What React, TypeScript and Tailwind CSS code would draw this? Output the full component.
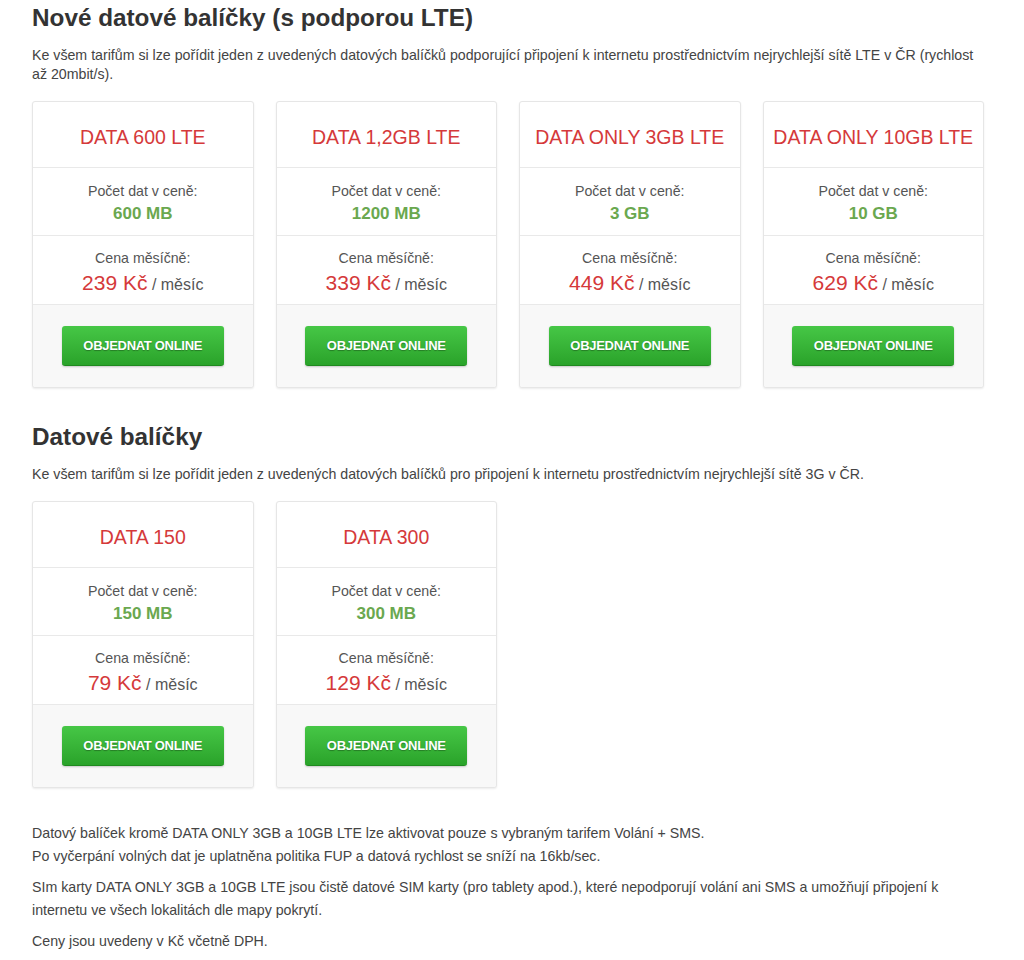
import React from "react";

type Pkg = { name: string; data: string; price: string };

const lte: Pkg[] = [
  { name: "DATA 600 LTE", data: "600 MB", price: "239 Kč" },
  { name: "DATA 1,2GB LTE", data: "1200 MB", price: "339 Kč" },
  { name: "DATA ONLY 3GB LTE", data: "3 GB", price: "449 Kč" },
  { name: "DATA ONLY 10GB LTE", data: "10 GB", price: "629 Kč" },
];

const basic: Pkg[] = [
  { name: "DATA 150", data: "150 MB", price: "79 Kč" },
  { name: "DATA 300", data: "300 MB", price: "129 Kč" },
];

function Card({ p }: { p: Pkg }) {
  return (
    <div className="flex flex-col rounded-[3px] border border-[#e6e6e6] bg-white shadow-[0_1px_2px_rgba(0,0,0,0.08)] text-center">
      <div className="h-[66px] flex items-center justify-center border-b border-[#e9e9e9] text-[19.5px] leading-[24px] text-[#d5393a] pt-[5px]">
        {p.name}
      </div>
      <div className="h-[68px] flex flex-col items-center justify-center gap-[3px] border-b border-[#e9e9e9] pt-[4px]">
        <div className="text-[14.2px] leading-[18px] text-[#555]">Počet dat v ceně:</div>
        <div className="text-[17px] leading-[22px] font-bold text-[#6aa84f]">{p.data}</div>
      </div>
      <div className="h-[69px] flex flex-col items-center justify-center gap-[3px] border-b border-[#e9e9e9] pt-[6px]">
        <div className="text-[14.2px] leading-[18px] text-[#555]">Cena měsíčně:</div>
        <div className="leading-[26px]">
          <span className="text-[21px] text-[#d5393a]">{p.price}</span>
          <span className="text-[16px] text-[#555]"> / měsíc</span>
        </div>
      </div>
      <div className="h-[82px] flex items-center justify-center bg-[#f8f8f8] rounded-b-[3px]">
        <button className="w-[162px] h-[40px] rounded-[3px] bg-gradient-to-b from-[#46c746] to-[#2aa32a] border-b border-[#1f8a1f] text-white text-[13px] font-bold tracking-[-0.3px] [text-shadow:0_1px_1px_rgba(0,0,0,0.3)] shadow-[0_1px_2px_rgba(0,0,0,0.2)]">
          OBJEDNAT ONLINE
        </button>
      </div>
    </div>
  );
}

export default function App() {
  return (
    <div className="min-h-[960px] bg-white font-['Liberation_Sans',Arial,sans-serif] text-[#444]">
      <div className="w-[952px] ml-[32px] pt-[5px]">
        <h2 className="text-[24.3px] leading-[26px] font-bold text-[#333]">Nové datové balíčky (s podporou LTE)</h2>
        <p className="mt-[15px] text-[14.2px] leading-[19px] text-[#444]">
          Ke všem tarifům si lze pořídit jeden z uvedených datových balíčků podporující připojení k internetu prostřednictvím nejrychlejší sítě LTE v ČR (rychlost až 20mbit/s).
        </p>
        <div className="mt-[17px] grid grid-cols-4 gap-[22px]">
          {lte.map((p) => (
            <Card key={p.name} p={p} />
          ))}
        </div>

        <h2 className="mt-[36px] text-[24.3px] leading-[26px] font-bold text-[#333]">Datové balíčky</h2>
        <p className="mt-[15px] text-[14.2px] leading-[19px] text-[#444]">
          Ke všem tarifům si lze pořídit jeden z uvedených datových balíčků pro připojení k internetu prostřednictvím nejrychlejší sítě 3G v ČR.
        </p>
        <div className="mt-[17px] grid grid-cols-4 gap-[22px]">
          {basic.map((p) => (
            <Card key={p.name} p={p} />
          ))}
        </div>

        <div className="mt-[34px] text-[14.2px] leading-[23px] text-[#444]">
          <p className="mb-[8px]">
            Datový balíček kromě DATA ONLY 3GB a 10GB LTE lze aktivovat pouze s vybraným tarifem Volání + SMS.
            <br />
            Po vyčerpání volných dat je uplatněna politika FUP a datová rychlost se sníží na 16kb/sec.
          </p>
          <p className="mb-[8px]">
            SIm karty DATA ONLY 3GB a 10GB LTE jsou čistě datové SIM karty (pro tablety apod.), které nepodporují volání ani SMS a umožňují připojení k internetu ve všech lokalitách dle mapy pokrytí.
          </p>
          <p>Ceny jsou uvedeny v Kč včetně DPH.</p>
        </div>
      </div>
    </div>
  );
}
